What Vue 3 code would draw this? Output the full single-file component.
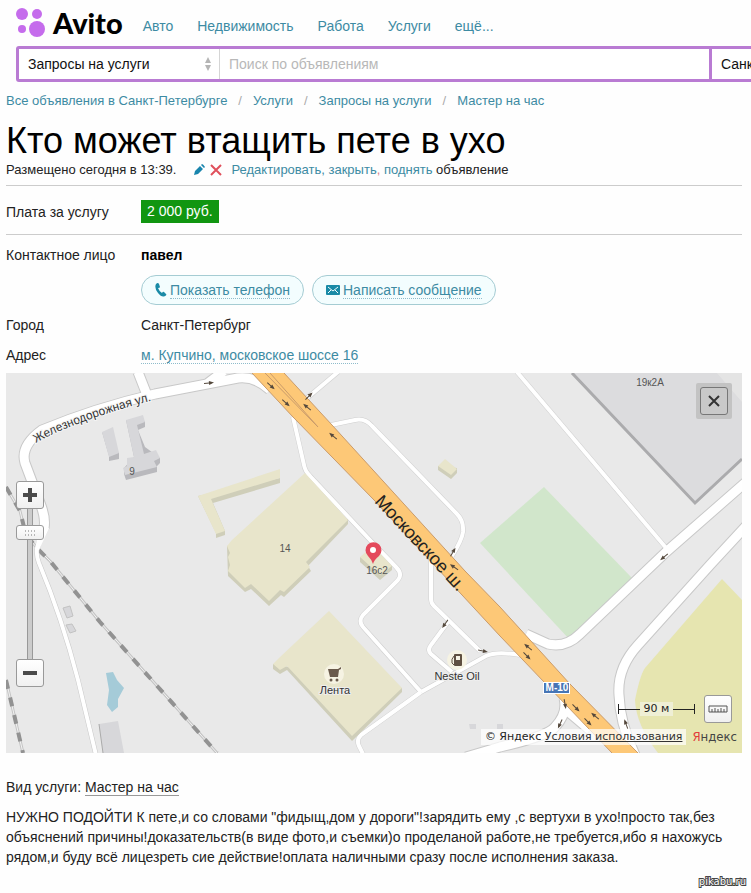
<script setup>
import { ref } from 'vue'

const sections = ['Авто', 'Недвижимость', 'Работа', 'Услуги', 'ещё...']
const crumbs = ['Все объявления в Санкт-Петербурге', 'Услуги', 'Запросы на услуги', 'Мастер на час']
const query = ref('')

// Traffic direction marks: x, y, rotation in degrees
const arrows = [
  [209, 383, -5], [271, 386, 42], [286, 403, 42], [309, 396, -45], [307, 407, 220],
  [333, 436, 220], [453, 552, -60], [454, 567, 215], [445, 624, 125], [483, 651, 12],
  [528, 647, 220], [527, 656, 45], [565, 704, 80], [576, 708, 45], [588, 722, 45],
  [595, 716, 220], [560, 724, 115], [626, 724, -110], [664, 557, 140]
]

const thinRoads = [
  'M338 372L306 399',
  'M331 425L355 420Q365 418 372 426L457 514Q464 521 463 532Q462 540 452 556',
  'M293 417L304 465Q305 471 310 476L370 540L396 567Q403 574 398 580L363 615Q358 621 363 627L421 692',
  'M421 692L361 735Q356 740 359 746L363 754',
  'M421 692L486 656Q496 651 520 655',
  'M431 556L431 599Q431 603 434 606L480 651',
  'M448 622L431 645Q427 650 431 654L452 672',
  'M517 372L667 549'
]
const wideRoads = [
  'M138 372L147 395', 'M224 371L208 383',
  'M270 390Q255 376 238 378L155 394Q95 408 42 430Q20 446 25 463L40 503Q46 518 44 528',
  'M746 482L666 552L580 634Q566 648 548 644L526 634',
  'M746 526L710 565L638 645Q617 668 619 695Q620 725 636 757',
  'M564 698Q568 713 555 727Q548 736 500 747L466 757', 'M564 708L590 730'
]
const rails = ['M6 487L20 511L25 531Q28 540 50 561L100 622L217 753', 'M6 680L13 710L23 753']
</script>

<template>
  <div class="page">
    <header class="top">
      <a class="logo" href="#" aria-label="Avito">
        <svg width="30" height="32" viewBox="0 0 30 32" aria-hidden="true">
          <g fill="#c56cec">
            <circle cx="7" cy="8" r="6" /><circle cx="22" cy="8" r="5" />
            <circle cx="7" cy="23" r="4" /><circle cx="22" cy="23" r="8" />
          </g>
        </svg>
        <span>Avito</span>
      </a>
      <nav class="nav">
        <a v-for="s in sections" :key="s" href="#">{{ s }}</a>
      </nav>
    </header>

    <div class="search-wrap">
      <form class="search" @submit.prevent>
        <div class="cat">
          <select aria-label="Категория"><option>Запросы на услуги</option></select>
          <svg class="sort" width="6" height="14" viewBox="0 0 6 14" aria-hidden="true">
            <path d="M3 0L6 6H0zM3 14L0 8H6z" fill="#b5b5b5" />
          </svg>
        </div>
        <input v-model="query" type="text" aria-label="Поиск" placeholder="Поиск по объявлениям">
        <select class="city" aria-label="Регион"><option>Санкт-Петербург</option></select>
      </form>
    </div>

    <main class="content">
      <nav class="crumbs" aria-label="Разделы">
        <template v-for="(c, i) in crumbs" :key="c">
          <i v-if="i">/</i><a href="#">{{ c }}</a>
        </template>
      </nav>
      <h1>Кто может втащить пете в ухо</h1>
      <div class="meta">
        <span>Размещено сегодня в 13:39.</span>
        <svg width="28" height="12" viewBox="0 0 28 12" aria-hidden="true">
          <path d="M0 11L1 7L6 2L9 5L4 10zM7 1L8 0Q9 0 11 3L10 4z" fill="#1985ad" />
          <path d="M17 1L27 11M27 1L17 11" stroke="#e0505c" stroke-width="2" />
        </svg>
        <span><a href="#">Редактировать, закрыть<em>,</em> поднять</a> объявление</span>
      </div>

      <div class="row price-row">
        <span>Плата за услугу</span>
        <span><b class="price">2 000 руб.</b></span>
      </div>
      <div class="row contact">
        <span>Контактное лицо</span>
        <strong>павел</strong>
      </div>
      <div class="row actions">
        <div class="pills">
          <button type="button">
            <svg width="12" height="14" viewBox="0 0 12 14" aria-hidden="true">
              <path d="M1 1Q3 -1 4 1L5 4Q5 5 3 5Q4 8 7 10Q8 8 9 9L11 11Q12 12 10 13Q7 15 3 10Q-1 5 1 1z" fill="#1a8aa6" />
            </svg>
            <span>Показать телефон</span>
          </button>
          <button type="button">
            <svg width="14" height="10" viewBox="0 0 14 10" aria-hidden="true">
              <rect width="14" height="10" rx="1" fill="#1a8aa6" />
              <path d="M2 2L7 6L12 2M2 8L5 5M12 8L9 5" fill="none" stroke="#f2feff" />
            </svg>
            <span>Написать сообщение</span>
          </button>
        </div>
      </div>
      <div class="row line"><span>Город</span><span>Санкт-Петербург</span></div>
      <div class="row line"><span>Адрес</span><span><a class="dotted" href="#">м. Купчино, московское шоссе 16</a></span></div>

      <section class="map" aria-label="Карта">
        <svg class="canvas" viewBox="6 373 736 380">
          <rect x="6" y="373" width="736" height="380" fill="#e9e9e9" />
          <path d="M544 487L632 578L570 640L480 543z" fill="#d1e6cb" />
          <path d="M722 579L742 600V753H658Q636 725 635 700Q640 675 645 668z" fill="#e6e5b0" />
          <path d="M106 673L113 672L117 680L124 688L118 699V707L112 712L107 705L109 690z" fill="#a5cbd8" />

          <g fill="none" stroke-linejoin="round">
            <g v-for="r in rails" :key="r">
              <path :d="r" stroke="#c4c4c4" stroke-width="3" />
              <path :d="r" stroke="#f2f2f2" />
              <path :d="r" stroke="#929292" stroke-width="4" stroke-dasharray="9 9" />
            </g>
            <path d="M44 526L37 549Q36 555 39 563Q62 618 78 680L96 755" stroke="#c8c8c8" stroke-width="5" />
            <path d="M44 526L37 549Q36 555 39 563Q62 618 78 680L96 755" stroke="#fff" stroke-width="4" />
            <path v-for="r in thinRoads" :key="'o' + r" :d="r" stroke="#cfcfcf" stroke-width="5" />
            <path v-for="r in wideRoads" :key="'w' + r" :d="r" stroke="#c8c8c8" stroke-width="11" />
            <path v-for="r in thinRoads" :key="r" :d="r" stroke="#fff" stroke-width="4" />
            <path v-for="r in wideRoads" :key="r" :d="r" stroke="#fff" stroke-width="9" />
          </g>
          <path d="M40 526L49 528L39 550L35 549z" fill="#fff" />

          <path d="M252 373L293 417L374 500L500 636L612 753H638L570 684L500 607L465 571L332 425L284 373z" fill="#fdc877" />
          <path d="M252 373L293 417L374 500L500 636L612 753M638 753L570 684L500 607L465 571L332 425L284 373M265 373L318 427M270 373L318 427" fill="none" stroke="#c99b6b" />

          <path d="M572 373L695 503L742 459V373z" fill="#dcdcde" />
          <path d="M717 373H742V402z" fill="#e4e4e4" />
          <path d="M572 373L695 503L742 459" fill="none" stroke="#ababad" stroke-width="3" />

          <g fill="#b9b9bd">
            <path d="M102 432L109 456V461L119 459V453z" />
            <path d="M126 420L134 457L124 468V474L126 480L157 472V466L160 463V458L145 447L138 430L145 427V421z" />
          </g>
          <g fill="#d7d7da">
            <path d="M102 432L113 427L119 453L109 457z" />
            <path d="M126 420L143 415L145 422L137 425L144 454L156 450L160 458L154 461L157 467L125 475L123 468L127 466V458L134 457z" />
            <path d="M99 724L118 721L124 753H103z" />
            <path d="M63 608L70 606L73 616L67 618zM66 625L72 624L76 631L70 633z" stroke="#c2c2c2" />
            <path d="M469 724H476V729H470zM497 724H503V729H497z" />
          </g>
          <path d="M99 724L103 753" stroke="#aaa" />

          <g fill="#cfceb9">
            <path d="M198 496L216 533V538L225 535V531L213 503L280 483V478z" />
            <path d="M227 546L228 576L245 592L251 589L269 606L281 595L284 597L311 571L308 566L348 524V519z" />
            <path d="M273 664V669L280 674L287 670L352 741L402 692V688z" />
            <path d="M360 557V562L380 580L392 570V566zM438 466V470L451 479L457 473V468z" />
          </g>
          <g fill="#e8e5cb">
            <path d="M198 496L280 469V478L211 499L225 531L216 534z" />
            <path d="M305 473L348 520L306 562L310 567L284 592L280 590L269 601L251 584L245 588L228 571L230 565L228 557L230 553L227 546L232 540z" />
            <path d="M329 611L402 688L352 736L287 666L280 670L273 664L279 658z" />
            <path d="M360 557L373 546L392 566L380 575zM438 466L445 459L457 469L451 475z" />
          </g>

          <g v-for="(a, i) in arrows" :key="i" :transform="`translate(${a[0]} ${a[1]}) rotate(${a[2]})`">
            <path d="M-5 0H3" stroke="#54483c" /><path d="M5 0L0 -2V2z" fill="#54483c" />
          </g>

          <circle cx="334" cy="674" r="10" fill="#f6f3e3" />
          <path d="M328 669H338L341 667V669L339 670L338 677H330z" fill="#6a5a4c" />
          <circle cx="331" cy="680" r="1.5" fill="#6a5a4c" /><circle cx="337" cy="680" r="1.5" fill="#6a5a4c" />
          <circle cx="457" cy="660" r="10" fill="#f6f3e3" />
          <rect x="454" y="654" width="8" height="12" rx="1" fill="#5f5041" />
          <rect x="456" y="656" width="4" height="4" fill="#f6f3e3" />
          <path d="M454 656Q451 659 452 663L454 665" fill="none" stroke="#5f5041" />

          <path id="rail-street" d="M36 443Q80 418 170 396" fill="none" />
          <text class="street"><textPath href="#rail-street">Железнодорожная ул.</textPath></text>
          <text class="avenue" transform="translate(374 502) rotate(47)">Московское ш.</text>
          <g class="house" text-anchor="middle">
            <text x="132" y="475">9</text>
            <text x="285" y="552">14</text>
            <text x="377" y="574">16с2</text>
            <text x="650" y="386">19к2А</text>
          </g>
          <g class="place" text-anchor="middle">
            <text x="335" y="694">Лента</text>
            <text x="457" y="680">Neste Oil</text>
          </g>
          <path d="M373 564Q372 560 368 556A8 8 0 1 1 379 556Q374 560 373 564z" fill="#e4495c" />
          <circle cx="373" cy="550" r="3" fill="#fff" />

          <rect x="543" y="682" width="27" height="12" fill="#fff" />
          <rect x="544" y="683" width="25" height="10" fill="#4775b5" />
          <text class="route" x="557" y="691" text-anchor="middle">М-10</text>
        </svg>

        <div class="zoom">
          <button type="button" aria-label="Приблизить">
            <svg width="14" height="14" viewBox="0 0 14 14"><path d="M5 0H9V5H14V9H9V14H5V9H0V5H5z" fill="#4b4b4b" /></svg>
          </button>
          <div class="track">
            <span class="thumb">
              <svg width="12" height="6" viewBox="0 0 12 6"><path d="M1 1H12M1 5H12" stroke="#777" stroke-dasharray="1 2" /></svg>
            </span>
          </div>
          <button type="button" aria-label="Отдалить">
            <svg width="14" height="4" viewBox="0 0 14 4"><path d="M0 0H14V4H0z" fill="#4b4b4b" /></svg>
          </button>
        </div>
        <div class="close">
          <button type="button" aria-label="Закрыть карту">
            <svg width="12" height="12" viewBox="0 0 12 12"><path d="M1 1L11 11M11 1L1 11" stroke="#333" stroke-width="2" /></svg>
          </button>
        </div>
        <div class="tools">
          <div class="scale"><span>90 м</span></div>
          <button type="button" aria-label="Линейка">
            <svg width="20" height="8" viewBox="0 0 20 8"><path d="M1 1H19V7H1zM4 4V7M7 3V7M10 4V7M13 3V7M16 4V7" fill="none" stroke="#555" /></svg>
          </button>
        </div>
        <div class="copyright">
          <span class="terms">© Яндекс <a href="#">Условия использования</a></span>
          <span class="yandex"><b>Я</b>ндекс</span>
        </div>
      </section>

      <p class="kind">Вид услуги: <a href="#">Мастер на час</a></p>
      <p class="text">НУЖНО ПОДОЙТИ К пете,и со словами "фидыщ,дом у дороги"!зарядить ему ,с вертухи в ухо!просто так,без объяснений причины!доказательств(в виде фото,и съемки)о проделаной работе,не требуется,ибо я нахожусь рядом,и буду всё лицезреть сие действие!оплата наличными сразу после исполнения заказа.</p>
    </main>
    <footer class="mark">pikabu.ru</footer>
  </div>
</template>

<style>
body { margin: 0; background: #fefefe; }
</style>

<style scoped>
.page {
  overflow: hidden;
  font: 14px/20px "Liberation Sans", Arial, sans-serif;
  color: #222;
}
a { color: #3d8ba3; text-decoration: none; }
button, select, input { font: inherit; color: inherit; }
svg { display: block; flex: none; }

.top { display: flex; align-items: center; gap: 20px; height: 46px; padding-left: 15px; }
.logo { display: flex; align-items: center; gap: 8px; color: #000; font: 900 29px/44px Lato, sans-serif; }
.logo svg { margin-top: -3px; }
.nav { display: flex; gap: 24px; padding-top: 6px; }

.search-wrap { padding-left: 16px; }
.search {
  display: flex;
  box-sizing: border-box;
  width: calc(100% + 100px);
  height: 36px;
  border: 3px solid #b97bd3;
  border-radius: 3px;
  background: #fff;
}
.search select, .search input { appearance: none; border: 0; outline: 0; background: none; padding: 0 9px; color: #111; }
.cat { position: relative; flex: 0 0 200px; display: flex; border-right: 1px solid #d5d5d5; }
.cat select { flex: 1; }
.sort { position: absolute; right: 8px; top: 8px; pointer-events: none; }
.search input { flex: 1; min-width: 0; }
.search input::placeholder { color: #b8b8b8; opacity: 1; }
.search .city { flex: 0 0 139px; box-sizing: border-box; border-left: 3px solid #b97bd3; }

.content { padding: 9px 9px 0 6px; }
.crumbs { display: flex; gap: 11px; font-size: 13px; }
.crumbs i { color: #aaa; font-style: normal; }
h1 { margin: 11px 0 0; font-size: 36px; line-height: 38px; font-weight: 400; color: #000; }
.meta { display: flex; align-items: center; gap: 9px; height: 20px; padding-bottom: 5px; border-bottom: 1px solid #ccc; font-size: 13px; }
.meta svg { margin-left: 9px; }
.meta em { color: #e0808a; font-style: normal; }

.row { display: grid; grid-template-columns: 135px 1fr; align-items: center; }
.price-row { height: 45px; padding-top: 3px; border-bottom: 1px solid #ccc; }
.price { display: inline-block; padding: 1px 6px; background: #119611; color: #fff; font-weight: 400; line-height: 21px; }
.contact { height: 40px; }
.contact strong { color: #000; }
.pills { grid-column: 2; display: flex; gap: 8px; }
.pills button {
  display: flex;
  align-items: center;
  gap: 3px;
  height: 30px;
  padding: 0 13px;
  border: 1px solid #a5ccd3;
  border-radius: 15px;
  background: #f3fdfe;
  color: #3d8ba3;
}
.pills span, .dotted { line-height: 16px; border-bottom: 1px dotted #8fbccb; }
.line { height: 30px; }
.actions { margin-bottom: 5px; }

.map { position: relative; margin-top: 3px; overflow: hidden; }
.canvas { width: 100%; height: auto; }
.street { font-size: 12px; fill: #333; stroke: #f4f4f4; stroke-width: 2px; paint-order: stroke; }
.avenue { font-size: 18px; fill: #222; }
.house { font-size: 10px; fill: #555; }
.place { font-size: 11px; fill: #333; stroke: #eee; stroke-width: 2px; paint-order: stroke; }
.route { font-size: 10px; font-weight: 700; fill: #fff; }

.map button, .thumb {
  display: flex;
  align-items: center;
  justify-content: center;
  box-sizing: border-box;
  width: 28px;
  height: 28px;
  padding: 0;
  border: 1px solid #999;
  border-radius: 3px;
  background: linear-gradient(#fff, #f0f0f0);
}
.zoom { position: absolute; left: 10px; top: 108px; }
.track { width: 4px; height: 150px; margin: 0 auto; border: solid #999; border-width: 0 1px; background: #ccc; }
.map .thumb { position: relative; left: -12px; top: 16px; height: 15px; }
.close { position: absolute; right: 10px; top: 10px; padding: 4px; border-radius: 2px; background: #c3c3c3; }
.map .close button { border-color: #777; background: #c9c9c9; }
.tools { position: absolute; right: 10px; bottom: 30px; display: flex; align-items: center; gap: 9px; }
.scale {
  display: flex;
  justify-content: center;
  width: 75px;
  border: solid #222;
  border-width: 0 1px;
  background: linear-gradient(#222, #222) center / 100% 1px no-repeat;
  font: 11px/10px "DejaVu Sans", sans-serif;
}
.scale span { margin: -2px 0; padding: 2px 4px; background: #efefd5; }
.copyright { position: absolute; right: 5px; bottom: 6px; display: flex; align-items: center; gap: 6px; }
.terms { padding: 0 4px; background: rgba(255, 255, 255, 0.7); font: 11px/16px "DejaVu Sans", sans-serif; white-space: nowrap; }
.terms a { color: #333; text-decoration: underline; }
.yandex { font: 13px/20px "DejaVu Sans Condensed", "DejaVu Sans", sans-serif; color: #444; }
.yandex b { color: #e23b3b; font-weight: 400; }

.kind { margin: 24px 0 0; }
.kind a { color: #222; border-bottom: 1px solid #999; }
.text { margin: 10px 0 0; }
.mark {
  padding: 7px 5px 0 0;
  text-align: right;
  font: 10px/16px "DejaVu Sans", sans-serif;
  color: #fff;
  -webkit-text-stroke: 2px #444;
  paint-order: stroke;
}
</style>
